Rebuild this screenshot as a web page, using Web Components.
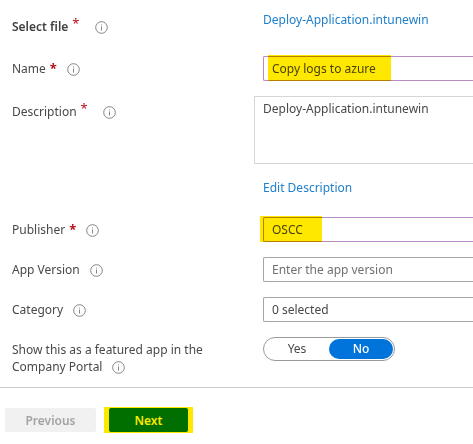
<!DOCTYPE html>
<html lang="en">
<head>
<meta charset="utf-8">
<title>App information</title>
<style>
  body {
    margin: 0;
    background: #fff;
    color: #484848;
    font: 12px/17px "Noto Sans", "Open Sans", sans-serif;
    overflow-x: hidden;
  }
</style>
</head>
<body>
<app-form></app-form>

<script>
const define = (name, html, setup) => {
  const template = document.createElement("template");
  template.innerHTML = html;
  customElements.define(name, class extends HTMLElement {
    constructor() {
      super();
      this.attachShadow({ mode: "open" }).append(template.content.cloneNode(true));
    }
    connectedCallback() {
      if (setup) setup(this, this.shadowRoot);
    }
  });
};

define("info-icon", `
  <style>
    :host { display: inline-block; width: 13px; height: 13px; color: #777; }
    svg { display: block; }
  </style>
  <svg width="13" height="13" viewBox="0 0 13 13" role="img" aria-label="Information">
    <circle cx="6.5" cy="6.5" r="5.8" fill="none" stroke="currentColor" stroke-width=".9"/>
    <path d="M6.5 5.5V9.5M6.5 3.5V4.4" stroke="currentColor" stroke-width=".9" fill="none"/>
  </svg>`);

/* Marker-pen stroke drawn over the slotted content. */
define("marker-pen", `
  <style>
    :host { display: block; position: relative; }
    .ink {
      position: absolute; top: -1px; bottom: var(--ink-bottom, 0);
      left: var(--ink-left, 0); width: var(--ink-width, 100%);
      background: #ffe800; mix-blend-mode: multiply; pointer-events: none;
    }
  </style>
  <slot></slot><div class="ink"></div>`);

/* A label column and a value column. */
define("form-row", `
  <style>
    :host { display: grid; grid-template-columns: 250px minmax(0, 1fr); align-items: start; }
    .label { padding: 4px 12px 0; }
    :host([low]) .label { padding-top: 10px; }
    :host([tall]) .label { padding-top: 7px; }
    :host([strong]) .text { font-weight: 600; color: #404040; }
    .star { color: #b5121b; font-weight: 700; margin-left: 4px; display: none; font-size: 13px; line-height: 1; }
    :host([required]) .star { display: inline; }
    :host([raised]) .star { position: relative; top: -3px; font-weight: 400; }
    info-icon { margin-left: 10px; vertical-align: -3px; }
    :host([raised]) info-icon { margin-left: 15px; }
    .value { padding-left: 13px; min-height: 25px; }
  </style>
  <div class="label"><span class="text"></span><span class="star">*</span><info-icon></info-icon></div>
  <div class="value"><slot></slot></div>`,
  (host, root) => { root.querySelector(".text").textContent = host.getAttribute("label"); });

define("text-field", `
  <style>
    :host { display: block; }
    input {
      box-sizing: border-box; display: block; width: 100%; height: 25px; margin: 0; padding: 0 8px;
      border: 1px solid #a6a6a6; border-right: 0; border-radius: 2px 0 0 2px;
      background: #fff; color: inherit; font: inherit; outline: 0;
    }
    input::placeholder { color: #707070; opacity: 1; }
    :host([edited]) input { border-color: #b98ac4; }
  </style>
  <input type="text">`,
  (host, root) => {
    const input = root.querySelector("input");
    input.value = host.getAttribute("value") || "";
    input.placeholder = host.getAttribute("placeholder") || "";
    input.setAttribute("aria-label", host.getAttribute("name"));
  });

define("text-area", `
  <style>
    :host { display: block; margin-left: -9px; }
    textarea {
      box-sizing: border-box; display: block; width: 100%; height: 68px; margin: 0; padding: 3px 8px;
      border: 1px solid #d6d6d6; border-right: 0; resize: none;
      background: #fff; color: inherit; font: inherit; outline: 0;
    }
  </style>
  <textarea aria-label="Description"></textarea>`,
  (host, root) => { root.querySelector("textarea").value = host.getAttribute("value"); });

define("text-link", `
  <style>
    :host { display: block; line-height: 24px; }
    a { color: #2080cc; text-decoration: none; }
  </style>
  <a href="#"><slot></slot></a>`);

define("drop-down", `
  <style>
    :host { display: block; }
    select {
      box-sizing: border-box; display: block; width: 100%; height: 25px; margin: 0; padding: 0 8px;
      appearance: none; border: 1px solid #a6a6a6; border-right: 0; border-radius: 2px 0 0 2px;
      background: #fff; color: inherit; font: inherit;
    }
  </style>
  <select aria-label="Category"><option>0 selected</option></select>`);

define("yes-no", `
  <style>
    :host { display: block; }
    .pill {
      box-sizing: border-box; display: grid; grid-template-columns: 1fr 1fr; width: 132px; height: 24px;
      padding: 1px; border: 1px solid #999; border-radius: 12px; background: #fff;
    }
    label { position: relative; border-radius: 10px; line-height: 20px; text-align: center; }
    input { position: absolute; inset: 0; margin: 0; opacity: 0; }
    label:has(input:checked) { background: #0074da; color: #fff; font-weight: 500; }
  </style>
  <div class="pill" role="radiogroup" aria-label="Show this as a featured app">
    <label><input type="radio" name="featured">Yes</label>
    <label><input type="radio" name="featured" checked>No</label>
  </div>`);

define("push-button", `
  <style>
    :host { display: block; }
    button {
      display: block; box-sizing: border-box; width: 100%; height: 24px; padding: 0; border: 0;
      border-radius: 2px; background: #007a00; color: #fff; font: inherit; font-weight: 600;
    }
    :host([disabled]) button { background: #f1f1f1; color: #a3a3a3; }
  </style>
  <button type="button"><slot></slot></button>`,
  (host, root) => { root.querySelector("button").disabled = host.hasAttribute("disabled"); });

define("app-form", `
  <style>
    :host { display: block; }
    form { display: grid; gap: 15px; padding: 8px 0 12px; }
    .first { min-height: 33px; }
    .stack { display: grid; gap: 12px; padding-bottom: 2px; }
    .name { --ink-left: 5px; --ink-width: 123px; }
    .publisher { --ink-left: -3px; --ink-width: 62px; }
    .action { --ink-bottom: -1px; }
    footer { display: flex; gap: 8px; padding: 20px 5px 12px; border-top: 1px solid #ccc; }
    .previous { width: 91px; }
    .next { padding: 0 5px; width: 79px; }
    footer push-button { flex: none; }
  </style>
  <form>
    <form-row class="first" label="Select file" required raised strong low>
      <text-link>Deploy-Application.intunewin</text-link>
    </form-row>
    <form-row label="Name" required>
      <marker-pen class="name"><text-field name="Name" value="Copy logs to azure" edited></text-field></marker-pen>
    </form-row>
    <form-row label="Description" required raised tall>
      <div class="stack">
        <text-area value="Deploy-Application.intunewin"></text-area>
        <text-link>Edit Description</text-link>
      </div>
    </form-row>
    <form-row label="Publisher" required>
      <marker-pen class="publisher"><text-field name="Publisher" value="OSCC" edited></text-field></marker-pen>
    </form-row>
    <form-row label="App Version">
      <text-field name="App Version" placeholder="Enter the app version"></text-field>
    </form-row>
    <form-row label="Category"><drop-down></drop-down></form-row>
    <form-row label="Show this as a featured app in the Company Portal"><yes-no></yes-no></form-row>
  </form>
  <footer>
    <push-button class="previous" disabled>Previous</push-button>
    <marker-pen class="action"><push-button class="next">Next</push-button></marker-pen>
  </footer>`);
</script>
</body>
</html>
